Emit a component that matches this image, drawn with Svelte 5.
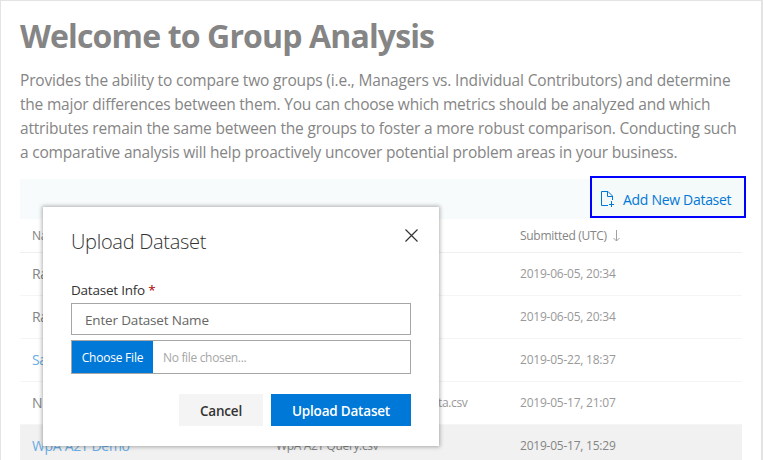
<script>
  const intro = [
    { text: 'Provides the ability to compare two groups (i.e., Managers vs. Individual Contributors) and determine', spacing: -0.17 },
    { text: 'the major differences between them. You can choose which metrics should be analyzed and which', spacing: -0.21 },
    { text: 'attributes remain the same between the groups to foster a more robust comparison. Conducting such', spacing: -0.2 },
    { text: 'a comparative analysis will help proactively uncover potential problem areas in your business.', spacing: -0.2 }
  ];
  const rows = [
    { name: 'Ra', file: '', date: '2019-06-05, 20:34' },
    { name: 'Ra', file: '', date: '2019-06-05, 20:34' },
    { name: 'Sa', file: '', date: '2019-05-22, 18:37', link: true },
    { name: 'N', file: 'ta.csv', date: '2019-05-17, 21:07', tail: true },
    { name: 'WpA A2T Demo', file: 'WpA A2T Query.csv', date: '2019-05-17, 15:29', link: true, active: true }
  ];
</script>

<main class="page">
  <h1>Welcome to Group Analysis</h1>
  <p class="intro">
    {#each intro as line}<span style:letter-spacing="{line.spacing}px">{line.text}</span>{/each}
  </p>

  <div class="toolbar">
    <button class="add">
      <svg width="15" height="17" viewBox="0 0 15 17" fill="none" stroke="#0078d7">
        <path d="M7 14.5H.5V.5H7L11.5 5V9M6.5 .5V5.5H11.5M10.5 10V16M8 13.5H13" />
      </svg>
      <span>Add New Dataset</span>
    </button>
  </div>

  <div class="table">
    <div class="row head">
      <span>Na</span><span></span>
      <span class="sort"><b>Submitted (UTC)</b>
        <svg width="7" height="12" viewBox="0 0 7 12" fill="none" stroke="#a0a0a0"><path d="M3.5 0V11M.5 8L3.5 11L6.5 8" /></svg>
      </span>
    </div>
    {#each rows as row}
      <div class="row" class:active={row.active}>
        <span class="name" class:link={row.link}>{row.name}</span>
        <span class="file" class:tail={row.tail}>{row.file}</span>
        <span class="date">{row.date}</span>
      </div>
    {/each}
  </div>

  <section class="dialog">
    <header>
      <h2>Upload Dataset</h2>
      <svg width="13" height="13" viewBox="0 0 13 13" fill="none" stroke="#333" stroke-width="1.2"><path d="M.5 .5L12.5 12.5M12.5 .5L.5 12.5" /></svg>
    </header>
    <div class="label"><span>Dataset Info</span> <i>*</i></div>
    <div class="input"><span>Enter Dataset Name</span></div>
    <div class="picker">
      <button class="choose"><span>Choose File</span></button>
      <span class="none">No file chosen...</span>
    </div>
    <footer>
      <button class="cancel"><span>Cancel</span></button>
      <button class="upload"><span>Upload Dataset</span></button>
    </footer>
  </section>
</main>

<style>
  :global(body) { overflow: hidden; }
  .page {
    position: relative;
    box-sizing: border-box;
    width: 763px;
    height: 460px;
    overflow: hidden;
    padding: 0 19px;
    border: solid #e3e3e3;
    border-width: 1px 2px 0 1px;
    background: #fff;
    color: #858585;
    font-family: "Open Sans", "Noto Sans", sans-serif;
    white-space: nowrap;
  }
  button { border: 0; padding: 0; margin: 0; font-family: inherit; }
  h1 { margin: 0; padding-top: 14px; height: 53px; font-size: 32px; line-height: 42px; font-weight: 700; letter-spacing: -0.86px; }
  .intro { margin: 0; height: 111px; font-size: 15.5px; line-height: 24px; }
  .intro span { display: block; }
  .toolbar { display: flex; justify-content: flex-end; width: 722px; height: 40px; background: #f8fbfc; }
  .add {
    display: flex;
    box-sizing: border-box;
    flex: none;
    width: 156px;
    height: 42px;
    margin: -3px -4px 0 0;
    padding: 5px 0 0 9px;
    align-items: center;
    gap: 7px;
    border: 2px solid #0000ff;
    background: #f4f9fa;
    color: #0078d7;
    font-size: 14px;
    letter-spacing: -0.3px;
  }
  .add svg { margin-top: -1px; }
  .table { width: 722px; }
  .row {
    display: grid;
    box-sizing: border-box;
    grid-template-columns: 244px 244px 1fr;
    height: 43px;
    padding: 0 0 2px 12px;
    border-bottom: 1px solid #f5f5f5;
    align-items: center;
    font-size: 12px;
    letter-spacing: -0.23px;
    color: #999;
  }
  .head { height: 34px; padding-bottom: 0; border-color: #efefef; color: #858585; }
  .sort { display: flex; align-items: center; gap: 6px; }
  .sort b { font-weight: 400; letter-spacing: -0.29px; }
  .name { font-size: 14px; letter-spacing: -0.33px; color: #858585; }
  .link { color: #6aace5; }
  .file { letter-spacing: -0.35px; }
  .active { padding-bottom: 1px; background: #f1f1f1; }
  .active .date, .active .file { color: #858585; }
  .tail { padding-left: 162px; }
  .dialog {
    position: absolute;
    left: 42px;
    top: 206px;
    box-sizing: border-box;
    width: 396px;
    height: 239px;
    padding: 20px 28px 0;
    background: #fff;
    box-shadow: 0 0 4px 1px rgba(0, 0, 0, 0.3);
    color: #333;
  }
  header { display: flex; justify-content: space-between; height: 52px; }
  header svg { margin: 2px -7px 0 0; }
  h2 { margin: 0; font-size: 20px; line-height: 30px; font-weight: 300; letter-spacing: -0.3px; }
  .label { height: 24px; font-size: 13.5px; line-height: 22px; letter-spacing: -0.22px; }
  .label i { font-style: normal; color: #a80000; }
  .input, .picker { display: flex; box-sizing: border-box; border: 1px solid #a6a6a6; align-items: center; }
  .input { height: 32px; padding: 2px 0 0 13px; color: #666; font-size: 13.5px; letter-spacing: -0.17px; }
  .picker { height: 34px; margin-top: 5px; }
  .choose { width: 81px; height: 32px; background: #0078d7; color: #fff; font-size: 12px; letter-spacing: -0.22px; }
  .none { padding: 1px 0 0 10px; color: #a6a6a6; font-size: 12px; letter-spacing: -0.33px; }
  footer { display: flex; justify-content: flex-end; gap: 8px; margin-top: 20px; }
  footer button { height: 32px; padding-top: 2px; font-size: 13.5px; font-weight: 600; letter-spacing: -0.2px; }
  .cancel { width: 84px; background: #f4f4f4; color: #333; }
  .upload { width: 140px; background: #0078d7; color: #fff; }
</style>
